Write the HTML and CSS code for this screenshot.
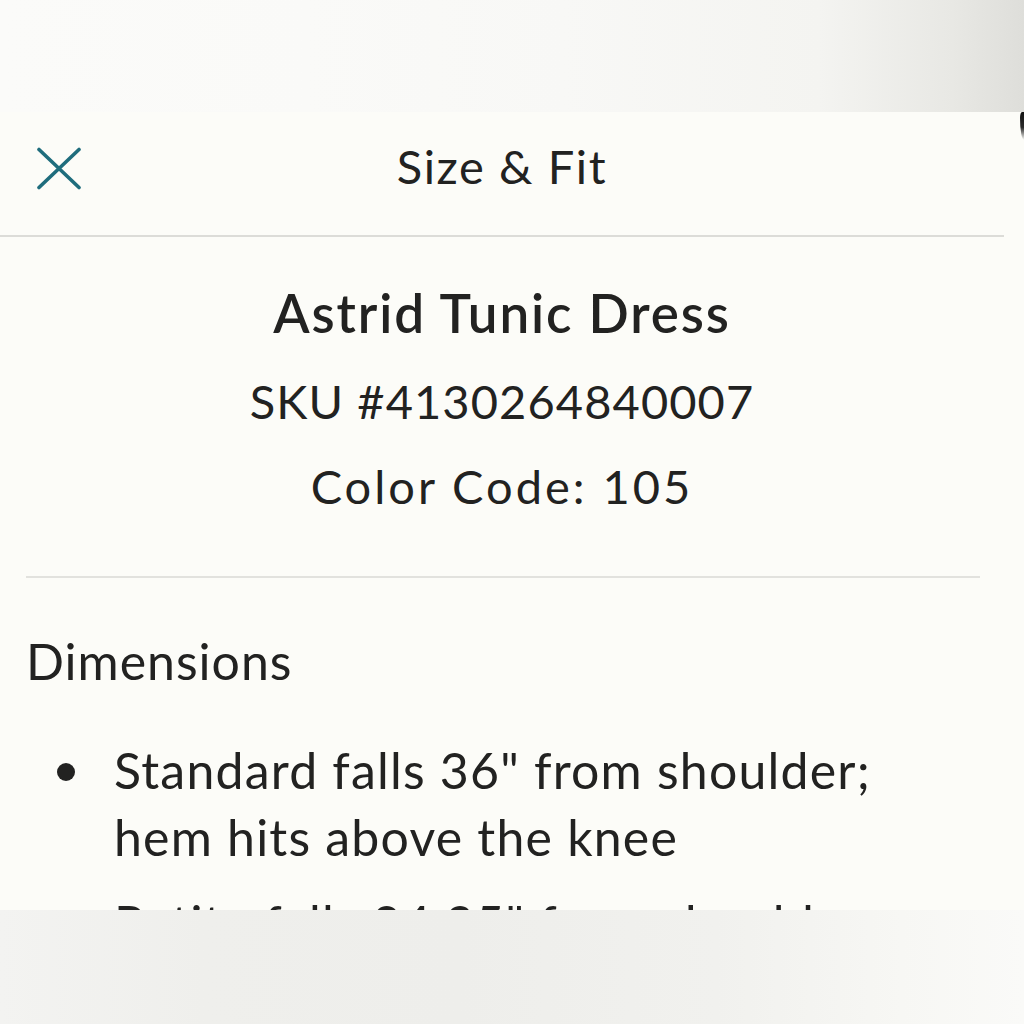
FILE: index.html
```html
<!DOCTYPE html>
<html lang="en">
<head>
<meta charset="utf-8">
<title>Size &amp; Fit</title>
<link rel="stylesheet" href="styles.css">
</head>
<body>
<div class="backdrop-top"></div>
<section class="sheet">
  <span class="edge-shadow"></span>
  <header class="sheet-header">
    <button class="close-btn" aria-label="Close">
      <svg width="46" height="43" viewBox="0 0 46 43">
        <path d="M3 2.5 L43 40.5 M43 2.5 L3 40.5" stroke="#1f6d7d" stroke-width="3.6" stroke-linecap="round" fill="none"/>
      </svg>
    </button>
    <h1 class="sheet-title">Size &amp; Fit</h1>
    <span class="spacer"></span>
  </header>
  <div class="product">
    <h2 class="product-name">Astrid Tunic Dress</h2>
    <p class="product-meta sku">SKU #4130264840007</p>
    <p class="product-meta color-code">Color Code: 105</p>
  </div>
  <div class="section">
    <h3 class="section-title">Dimensions</h3>
    <ul class="dim-list">
      <li>Standard falls 36" from shoulder; hem hits above the knee</li>
      <li>Petite falls 34.25" from shoulder</li>
    </ul>
  </div>
</section>
<div class="backdrop-bottom"></div>
</body>
</html>
```
FILE: styles.css
```css
* { box-sizing: border-box; }
html, body {
  margin: 0;
  padding: 0;
  width: 1024px;
  height: 1024px;
  overflow: hidden;
}
body {
  font-family: "Lato", "Noto Sans", sans-serif;
  color: #222221;
  background: #fcfcf8;
  position: relative;
}
.backdrop-top {
  height: 112px;
  background:
    linear-gradient(90deg, #fbfbf9 0%, #fafaf8 30%, #f8f8f6 55%, #f4f4f1 80%, #e8e8e4 93%, #dededa 100%);
}
.sheet {
  background: #fcfcf8;
  width: 1024px;
  height: 798px;
  overflow: hidden;
  position: relative;
}
.edge-shadow {
  position: absolute;
  right: 0;
  top: 0;
  width: 4px;
  height: 28px;
  background: linear-gradient(180deg, #111 0%, #2a2a2a 55%, rgba(60,60,60,0) 100%);
  border-top-left-radius: 2px 6px;
  border-bottom-left-radius: 4px 22px;
}
.sheet-header {
  height: 125px;
  padding: 26px 0 0 0;
  border-bottom: 2px solid #dcdcd8;
  display: grid;
  grid-template-columns: 1fr auto 1fr;
  width: 1004px;
  align-items: start;
}
.close-btn {
  justify-self: start;
  margin: 9px 0 0 36px;
  padding: 0;
  border: 0;
  background: none;
  width: 46px;
  height: 43px;
  display: block;
}
.close-btn svg { display: block; }
.sheet-title {
  margin: 0;
  font-size: 47px;
  line-height: 56px;
  font-weight: 400;
  letter-spacing: 1.6px;
  color: #222221;
}
.product {
  width: 1004px;
  text-align: center;
  padding-top: 29px;
}
.product-name {
  margin: 0;
  font-size: 53px;
  line-height: 93px;
  font-weight: 600;
  letter-spacing: 1.9px;
}
.product-meta {
  margin: 0;
  font-size: 47px;
  line-height: 85px;
  font-weight: 400;
}
.sku { letter-spacing: 1.1px; }
.color-code { letter-spacing: 3px; }
.section {
  width: 1004px;
  margin: 47px 0 0 0;
  padding: 0 0 0 26px;
}
.section::before {
  content: "";
  display: block;
  height: 2px;
  margin-right: 24px;
  background: #e2e2de;
  margin-bottom: 50px;
}
.section-title {
  margin: 0;
  font-size: 50px;
  line-height: 67px;
  font-weight: 400;
  letter-spacing: 1px;
}
.dim-list {
  list-style: none;
  margin: 42px 0 0 0;
  padding: 0 40px 0 88px;
}
.dim-list li {
  position: relative;
  font-size: 50px;
  line-height: 67px;
  letter-spacing: 1.2px;
  margin-bottom: 19px;
}
.dim-list li::before {
  content: "";
  position: absolute;
  left: -57px;
  top: 26px;
  width: 18px;
  height: 18px;
  border-radius: 50%;
  background: #222221;
}
.backdrop-bottom {
  height: 114px;
  background:
    linear-gradient(90deg, #f3f3f1 0%, #efefec 20%, #eeeeeb 45%, #f1f1ee 70%, #f7f7f4 88%, #fafaf8 100%);
}
```
